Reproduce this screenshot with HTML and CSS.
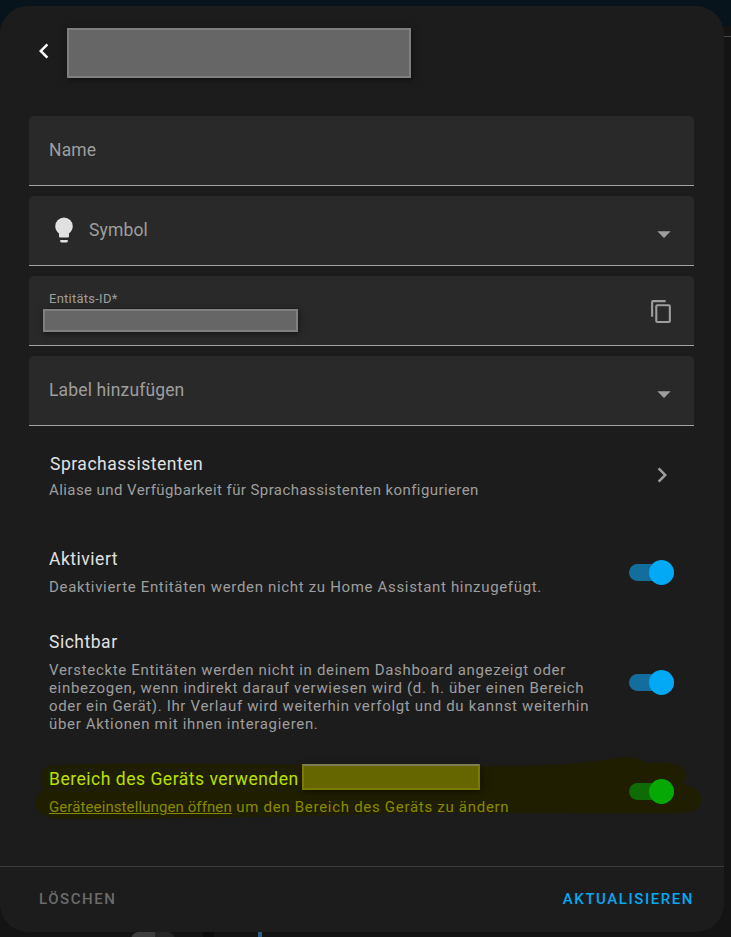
FILE: index.html
```html
<!DOCTYPE html>
<html lang="de">
<head>
<meta charset="utf-8">
<title>Entität</title>
<link rel="stylesheet" href="styles.css">
</head>
<body>
<div class="page">
  <span class="edge-line"></span>
  <div class="dialog">
    <header class="head">
      <svg class="back" viewBox="0 0 24 24"><path d="M15.41 16.58 10.83 12l4.58-4.59L14 6l-6 6 6 6z"/></svg>
      <div class="redact redact-title"></div>
    </header>
    <main class="body">
      <div class="field"><span class="label">Name</span></div>
      <div class="field">
        <svg class="bulb" viewBox="0 0 24 24"><path d="M12 2a7 7 0 0 0-7 7c0 2.38 1.19 4.47 3 5.74V17a1 1 0 0 0 1 1h6a1 1 0 0 0 1-1v-2.26c1.81-1.27 3-3.36 3-5.74a7 7 0 0 0-7-7M9 21a1 1 0 0 0 1 1h4a1 1 0 0 0 1-1v-1H9z"/></svg>
        <span class="label">Symbol</span>
        <svg class="caret" viewBox="0 0 24 24"><path d="M7 10l5 5 5-5z"/></svg>
      </div>
      <div class="field field-id">
        <div class="id-text">
          <span class="small-label">Entitäts-ID*</span>
          <div class="redact redact-id"></div>
        </div>
        <svg class="copy" viewBox="0 0 24 24"><path d="M19 21H8V7h11m0-2H8a2 2 0 0 0-2 2v14a2 2 0 0 0 2 2h11a2 2 0 0 0 2-2V7a2 2 0 0 0-2-2m-3-4H4a2 2 0 0 0-2 2v14h2V3h12z"/></svg>
      </div>
      <div class="field">
        <span class="label">Label hinzufügen</span>
        <svg class="caret" viewBox="0 0 24 24"><path d="M7 10l5 5 5-5z"/></svg>
      </div>

      <div class="row row-voice">
        <div class="row-text">
          <div class="row-title">Sprachassistenten</div>
          <div class="row-sub">Aliase und Verfügbarkeit für Sprachassistenten konfigurieren</div>
        </div>
        <svg class="chevron" viewBox="0 0 24 24"><path d="M8.59 16.58 13.17 12 8.59 7.41 10 6l6 6-6 6z"/></svg>
      </div>

      <div class="row row-active">
        <div class="row-text">
          <div class="row-title">Aktiviert</div>
          <div class="row-sub">Deaktivierte Entitäten werden nicht zu Home Assistant hinzugefügt.</div>
        </div>
        <div class="switch"><span class="thumb"></span></div>
      </div>

      <div class="row row-visible">
        <div class="row-text">
          <div class="row-title">Sichtbar</div>
          <div class="row-sub">Versteckte Entitäten werden nicht in deinem Dashboard angezeigt oder<br>einbezogen, wenn indirekt darauf verwiesen wird (d. h. über einen Bereich<br>oder ein Gerät). Ihr Verlauf wird weiterhin verfolgt und du kannst weiterhin<br>über Aktionen mit ihnen interagieren.</div>
        </div>
        <div class="switch"><span class="thumb"></span></div>
      </div>

      <div class="row row-area">
        <svg class="scribble" viewBox="0 0 731 80"><path d="M48 9C120 5 230 7 300 8L480 9C540 9 590 7 622 0C632 -2 640 3 648 6C665 5 680 6 684 12C688 18 686 23 680 27C692 27 702 35 702 43C702 52 692 55 680 56C640 57 600 56 560 56L400 56C300 60 130 62 60 62C46 61 36 55 35 47C35 40 40 35 44 32C40 24 38 14 48 9Z"/></svg>
        <div class="row-text">
          <div class="row-title area-title">Bereich des Geräts verwenden<span class="redact redact-area"></span></div>
          <div class="row-sub area-sub"><a class="area-link" href="#">Geräteeinstellungen öffnen</a> um den Bereich des Geräts zu ändern</div>
        </div>
        <div class="switch switch-green"><span class="thumb"></span></div>
      </div>
    </main>
    <footer class="foot">
      <span class="btn btn-delete">LÖSCHEN</span>
      <span class="btn btn-update">AKTUALISIEREN</span>
    </footer>
  </div>
  <div class="under">
    <span class="under-blob"></span>
    <span class="under-square"></span>
    <span class="under-blue"></span>
  </div>
</div>
</body>
</html>
```
FILE: styles.css
```css
* { box-sizing: border-box; }
html, body { margin: 0; height: 100%; }
body { background: #141414; font-family: Roboto, "Liberation Sans", sans-serif; overflow: hidden; }
.page {
  width: 731px; height: 937px; padding: 6px 7px 0 0; position: relative;
  background: linear-gradient(#08141c 0, #08141c 26px, #141414 26px);
}
.edge-line { position: absolute; right: 0; top: 36px; width: 7px; height: 1px; background: #4a4a4a; }
.dialog {
  height: 926px; background: #1c1c1c; border-radius: 28px;
  display: flex; flex-direction: column;
}
.head { height: 110px; padding: 22px 0 0 29px; display: flex; align-items: flex-start; flex: none; }
.back { width: 30px; height: 30px; fill: #fff; margin-top: 8px; flex: none; }
.redact { background: #666; border: 2px solid #808080; box-shadow: 1px 2px 6px rgba(0,0,0,.5); }
.redact-title { width: 344px; height: 50px; margin-left: 8px; }
.body { flex: 1; padding: 0 30px 0 29px; display: flex; flex-direction: column; }
.field {
  height: 70px; margin-bottom: 10px; padding: 0 20px;
  background: #292929; border-bottom: 1px solid #a3a3a3; border-radius: 5px 5px 0 0;
  display: flex; align-items: center; flex: none;
}
.label { font-size: 17.5px; color: #9e9e9e; letter-spacing: .15px; line-height: 24px; margin-top: -1px; }
.bulb { width: 30px; height: 30px; fill: #e1e1e1; margin: -2px 10px 0 0; flex: none; }
.caret { width: 32px; height: 32px; fill: #9e9e9e; margin: 7px -6px 0 auto; flex: none; }
.field-id { align-items: flex-start; justify-content: space-between; padding-top: 15px; }
.id-text { display: flex; flex-direction: column; }
.small-label { font-size: 13px; line-height: 16px; color: #9e9e9e; letter-spacing: .25px; }
.redact-id { width: 255px; height: 23px; margin: 2px 0 0 -6px; }
.copy { width: 25px; height: 25px; fill: #9e9e9e; margin-top: 8px; flex: none; }
.row { display: flex; align-items: flex-start; justify-content: space-between; position: relative; flex: none; padding-left: 20px; }
.row-text { position: relative; }
.row-title { font-size: 17.5px; line-height: 24px; color: #e1e1e1; letter-spacing: .52px; white-space: nowrap; }
.row-sub { font-size: 15px; line-height: 18px; color: #9e9e9e; letter-spacing: .67px; white-space: nowrap; margin-top: 7px; }
.row-voice { margin-top: 16px; align-items: center; }
.row-voice .row-title { margin-left: 1px; }
.row-voice .row-sub { letter-spacing: .42px; line-height: 20px; margin-top: 4px; }
.chevron { width: 30px; height: 30px; fill: #9e9e9e; margin: -2px 17px 0 0; flex: none; }
.row-active { margin-top: 47px; }
.row-active .row-sub { line-height: 20px; margin-top: 6px; }
.row-visible { margin-top: 33px; }
.row-area { margin-top: 34px; }
.scribble { position: absolute; left: -29px; top: -10px; width: 731px; height: 80px; fill: #1f1e00; }
.area-title { color: #b9e000; display: flex; align-items: center; height: 24px; }
.area-sub { color: #8a8a00; margin-top: 6px; line-height: 20px; letter-spacing: .71px; }
.area-link { color: #8a8a00; letter-spacing: .1px; }
.redact-area {
  flex: none; width: 178px; height: 26px; margin: -4px 0 0 3px;
  background: #666600; border-color: #7a7a00; border-top-color: #7f7f55;
}
.switch { width: 45px; height: 17px; margin-right: 20px; border-radius: 9px; background: #136e9e; position: relative; flex: none; }
.row-active .switch { margin-top: 17px; }
.row-visible .switch { margin-top: 44px; }
.thumb { position: absolute; right: 0; top: -4px; width: 25px; height: 25px; border-radius: 50%; background: #03a9f4; }
.switch-green { background: #0f6b06; margin-top: 16px; }
.switch-green .thumb { background: #05a805; }
.foot {
  height: 66px; flex: none; border-top: 1px solid #3b3b3b;
  display: flex; justify-content: space-between; align-items: center;
  padding: 0 30px 2px 39px;
}
.btn { font-size: 15px; font-weight: 500; letter-spacing: 1.56px; }
.btn-delete { color: #6b6b6b; }
.btn-update { color: #03a9f4; }
.under { height: 5px; display: flex; overflow: hidden; background: #141414; width: 731px; }
.under-blob { width: 44px; height: 8px; margin-left: 131px; border-radius: 14px 14px 0 0; background: linear-gradient(90deg, #3d3d3d 0 55%, #262626 55%); flex: none; }
.under-square { width: 11px; height: 5px; margin-left: 28px; background: #0c0c0c; flex: none; }
.under-blue { width: 4px; height: 5px; margin-left: 44px; background: #2e5a80; flex: none; }
```
